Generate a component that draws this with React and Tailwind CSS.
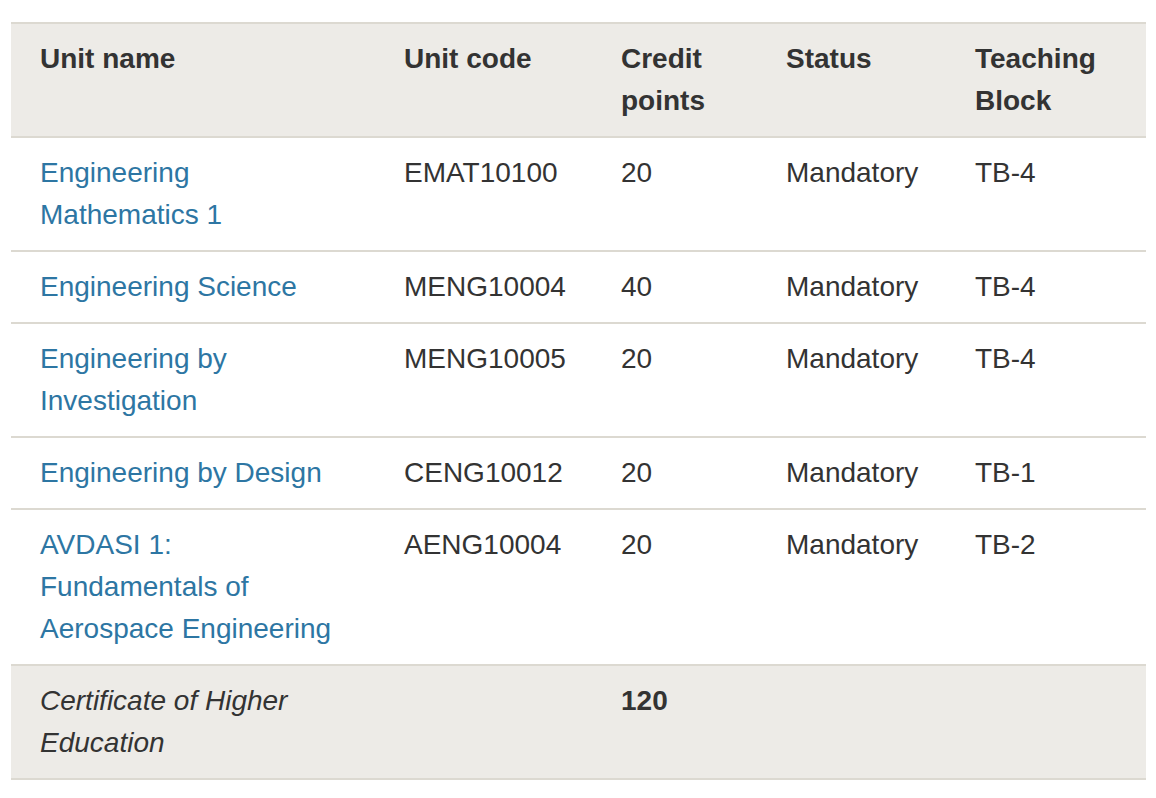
const UNITS = [
  { name: 'Engineering Mathematics 1', code: 'EMAT10100', credits: 20, status: 'Mandatory', block: 'TB-4' },
  { name: 'Engineering Science', code: 'MENG10004', credits: 40, status: 'Mandatory', block: 'TB-4' },
  { name: 'Engineering by Investigation', code: 'MENG10005', credits: 20, status: 'Mandatory', block: 'TB-4' },
  { name: 'Engineering by Design', code: 'CENG10012', credits: 20, status: 'Mandatory', block: 'TB-1' },
  { name: 'AVDASI 1: Fundamentals of Aerospace Engineering', code: 'AENG10004', credits: 20, status: 'Mandatory', block: 'TB-2' },
]

const cell = 'pl-[29px] pr-[27px] py-[14px] align-top text-left'

export default function App() {
  return (
    <div className="bg-white w-[1156px] h-[798px] pt-[22px] pl-[11px] font-['Liberation_Sans',Arial,sans-serif] text-[28px] leading-[42px] text-[#333]">
      <table className="w-[1135px] table-fixed border-collapse">
        <colgroup>
          <col className="w-[364px]" />
          <col className="w-[217px]" />
          <col className="w-[165px]" />
          <col className="w-[189px]" />
          <col />
        </colgroup>
        <thead>
          <tr className="bg-[#edebe7] border-t-2 border-b-2 border-[#dcd9d1]">
            <th className={`${cell} font-bold`}>Unit name</th>
            <th className={`${cell} font-bold`}>Unit code</th>
            <th className={`${cell} font-bold`}>Credit points</th>
            <th className={`${cell} font-bold`}>Status</th>
            <th className={`${cell} font-bold`}>Teaching Block</th>
          </tr>
        </thead>
        <tbody>
          {UNITS.map(u => (
            <tr key={u.code} className="border-b-2 border-[#dcd9d1]">
              <td className={cell}>
                <a href="#" className="text-[#2d76a3]">{u.name}</a>
              </td>
              <td className={cell}>{u.code}</td>
              <td className={cell}>{u.credits}</td>
              <td className={cell}>{u.status}</td>
              <td className={cell}>{u.block}</td>
            </tr>
          ))}
          <tr className="bg-[#edebe7] border-b-2 border-[#dcd9d1]">
            <td className={`${cell} italic`}>Certificate of Higher Education</td>
            <td className={cell}></td>
            <td className={`${cell} font-bold`}>120</td>
            <td className={cell}></td>
            <td className={cell}></td>
          </tr>
        </tbody>
      </table>
    </div>
  )
}
